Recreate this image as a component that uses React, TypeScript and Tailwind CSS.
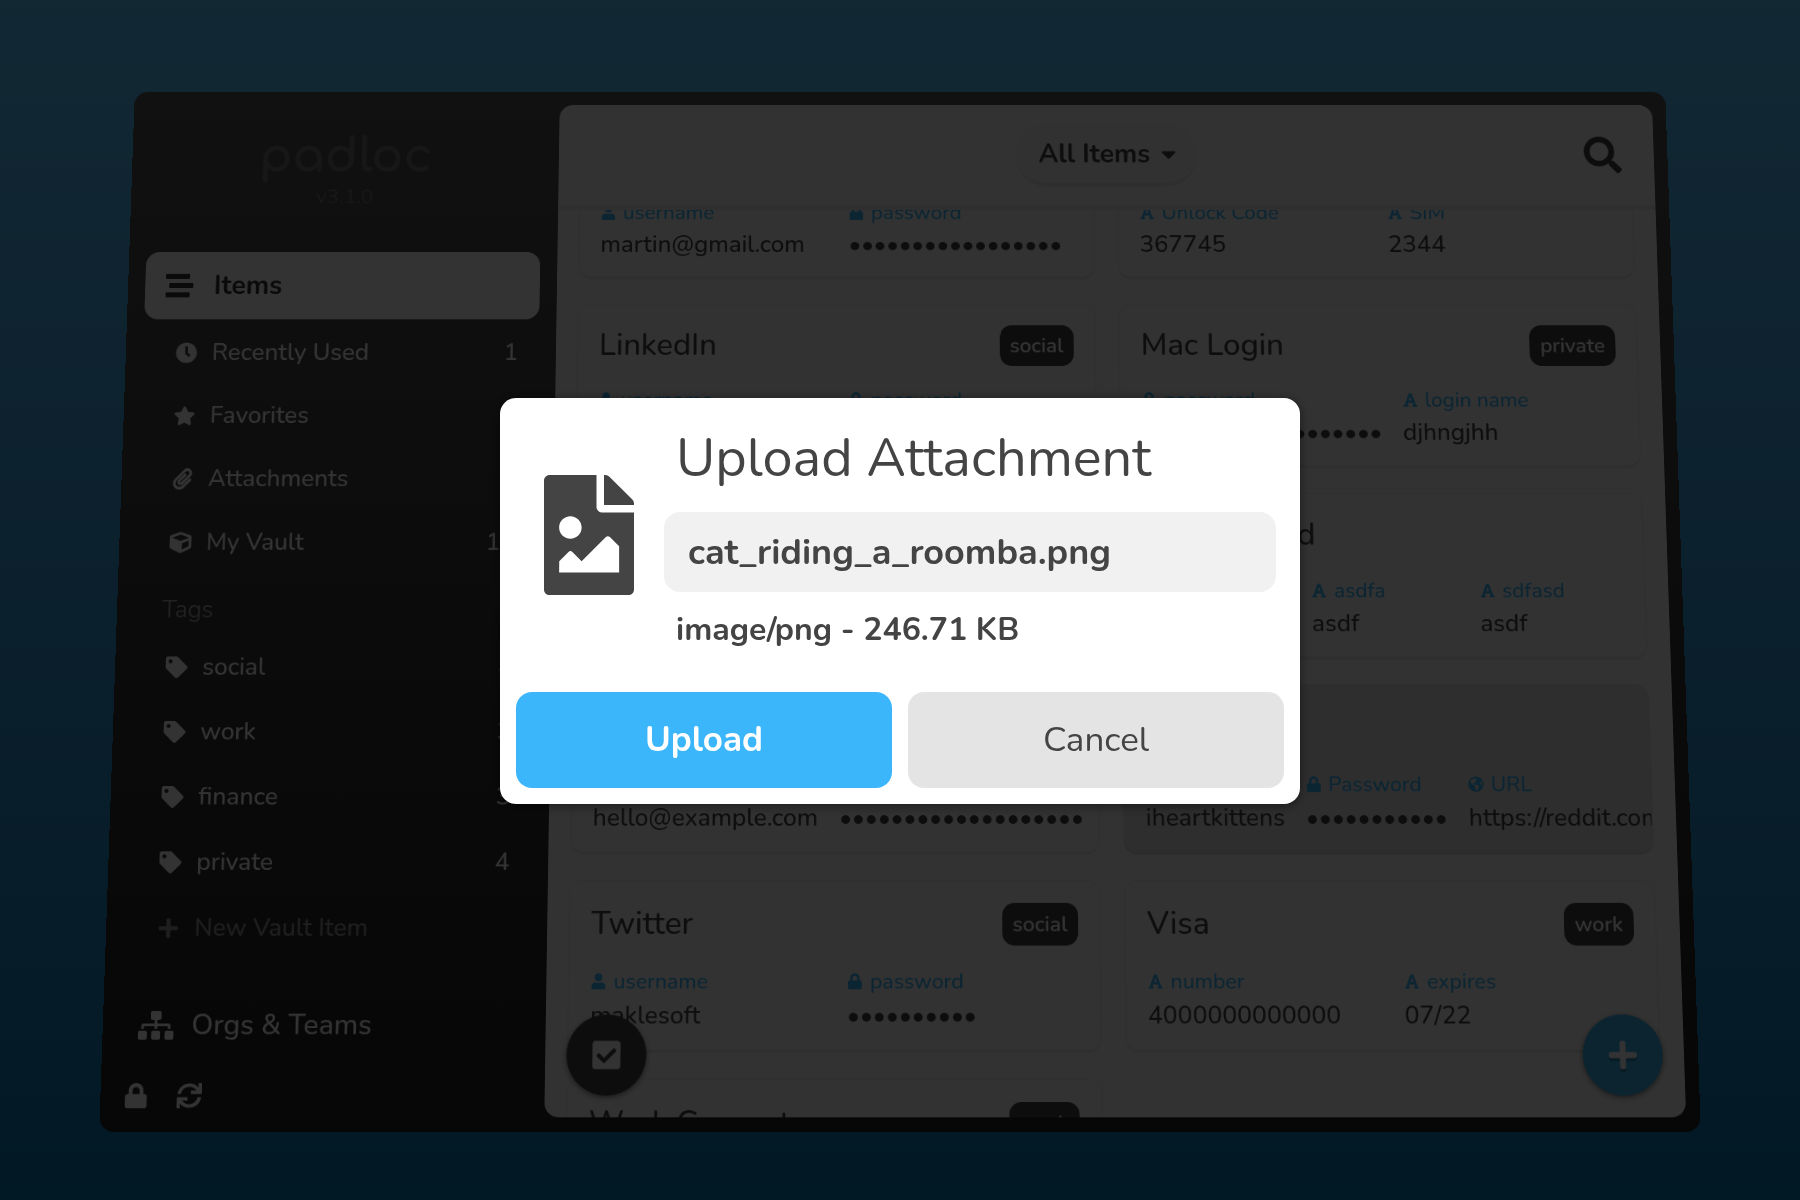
import type { ReactNode } from "react";
import type { IconType } from "react-icons";
import {
  FaCaretDown,
  FaCheckSquare,
  FaClock,
  FaCube,
  FaFileImage,
  FaFont,
  FaGlobeAmericas,
  FaLock,
  FaPaperclip,
  FaPlus,
  FaSearch,
  FaSitemap,
  FaStar,
  FaStream,
  FaSync,
  FaTag,
  FaUser,
} from "react-icons/fa";

type Field = { icon: IconType; label: string; value: string };
type Item = { title: string; tag?: string; fields: Field[]; selected?: boolean };

const user = (value: string, label = "username"): Field => ({ icon: FaUser, label, value });
const secret = (length: number, label = "password"): Field => ({ icon: FaLock, label, value: "•".repeat(length) });
const plain = (label: string, value: string): Field => ({ icon: FaFont, label, value });

const items: Item[] = [
  { title: "Google", tag: "work", fields: [user("martin@gmail.com"), secret(17)] },
  { title: "iPhone", tag: "private", fields: [plain("Unlock Code", "367745"), plain("SIM", "2344")] },
  { title: "LinkedIn", tag: "social", fields: [user("maklesoft"), secret(12)] },
  { title: "Mac Login", tag: "private", fields: [secret(19), plain("login name", "djhngjhh")] },
  { title: "Netflix", tag: "private", fields: [user("martin"), secret(12)] },
  { title: "New Record", fields: [plain("asdf", "asdf"), plain("asdfa", "asdf"), plain("sdfasd", "asdf")] },
  { title: "Paypal", tag: "finance", fields: [user("hello@example.com"), secret(19)] },
  {
    title: "Reddit",
    selected: true,
    fields: [
      user("iheartkittens", "Username"),
      secret(11, "Password"),
      { icon: FaGlobeAmericas, label: "URL", value: "https://reddit.com" },
    ],
  },
  { title: "Twitter", tag: "social", fields: [user("maklesoft"), secret(10)] },
  { title: "Visa", tag: "work", fields: [plain("number", "4000000000000"), plain("expires", "07/22")] },
  { title: "Work Computer", tag: "work", fields: [user("martin"), secret(12)] },
];

function NavRow({ icon: Icon, label, count, muted }: { icon: IconType; label: string; count?: number; muted?: boolean }) {
  return (
    <li>
      <button
        type="button"
        className={`flex h-[74px] w-full items-center px-6 text-left text-[28px] text-white ${muted ? "opacity-50" : ""}`}
      >
        <span className="-ml-1 flex w-[60px] justify-center">
          <Icon className="size-[25px]" />
        </span>
        <span className="flex-1">{label}</span>
        {count !== undefined && <span>{count}</span>}
      </button>
    </li>
  );
}

function IconButton({ label, children }: { label: string; children: ReactNode }) {
  return (
    <button type="button" aria-label={label} className="flex size-[60px] items-center justify-center">
      {children}
    </button>
  );
}

function Sidebar() {
  return (
    <aside className="flex w-[500px] shrink-0 flex-col px-5 text-white">
      <div className="h-48 shrink-0 pt-12 text-center opacity-20">
        <div className="font-[Comfortaa,Quicksand,Inter,sans-serif] text-[56px] leading-[60px] font-bold">padloc</div>
        <div className="mt-1 text-2xl leading-7">v3.1.0</div>
      </div>
      <nav className="flex flex-1 flex-col">
        <button
          type="button"
          className="flex h-20 items-center gap-2.5 rounded-2xl bg-white pl-2.5 text-left text-[31px] font-bold text-[#333]"
        >
          <span className="flex w-[60px] justify-center">
            <FaStream className="size-8" />
          </span>
          Items
        </button>
        <ul className="pt-0.5">
          <NavRow icon={FaClock} label="Recently Used" count={1} />
          <NavRow icon={FaStar} label="Favorites" count={2} />
          <NavRow icon={FaPaperclip} label="Attachments" count={1} />
          <NavRow icon={FaCube} label="My Vault" count={13} />
        </ul>
        <h2 className="flex h-[70px] items-center pt-3 pl-8 text-[28px] font-light opacity-60">Tags</h2>
        <ul>
          <NavRow icon={FaTag} label="social" count={4} />
          <NavRow icon={FaTag} label="work" count={3} />
          <NavRow icon={FaTag} label="finance" count={3} />
          <NavRow icon={FaTag} label="private" count={4} />
          <NavRow icon={FaPlus} label="New Vault Item" muted />
        </ul>
        <button type="button" className="mt-auto flex h-20 items-center gap-2.5 pl-2.5 text-left text-[32px]">
          <span className="flex w-[60px] justify-center">
            <FaSitemap className="h-8 w-10" />
          </span>
          Orgs &amp; Teams
        </button>
      </nav>
      <div className="-mx-2.5 mt-2 mb-2.5 flex">
        <IconButton label="Lock">
          <FaLock className="size-7" />
        </IconButton>
        <IconButton label="Synchronize">
          <FaSync className="size-7" />
        </IconButton>
      </div>
    </aside>
  );
}

function Card({ item }: { item: Item }) {
  return (
    <article
      className={`h-[194px] overflow-hidden rounded-2xl border-2 border-b-4 ${
        item.selected ? "border-[#e4e4e4] border-b-[#dcdcdc] bg-[#e6e6e6]" : "border-[#f0f0f0] border-b-[#e8e8e8] bg-[#fafafa]"
      }`}
    >
      <header className="flex h-24 items-center justify-between px-6">
        <h3 className="text-4xl">{item.title}</h3>
        {item.tag && (
          <span className="flex h-12 items-center rounded-[14px] bg-[#444] px-3 text-2xl font-semibold text-white">
            {item.tag}
          </span>
        )}
      </header>
      <dl className="flex pr-2 pl-3">
        {item.fields.map(({ icon: Icon, label, value }) => (
          <div key={label} className="flex-1 px-3 whitespace-nowrap">
            <dt className="flex h-8 items-center gap-2 text-2xl text-[#3bb7f9]">
              <Icon className="size-[18px]" />
              {label}
            </dt>
            <dd className="flex h-11 items-center text-[28px]">{value}</dd>
          </div>
        ))}
      </dl>
    </article>
  );
}

function ItemList() {
  return (
    <main className="relative my-4 mr-4 flex min-w-0 flex-1 flex-col overflow-hidden rounded-2xl bg-[#fafafa] text-[#444]">
      <header className="grid h-[126px] shrink-0 grid-cols-[1fr_auto_1fr] items-center border-b-[6px] border-[#ebebeb] px-[38px]">
        <button
          type="button"
          className="col-start-2 flex h-[76px] items-center gap-2 rounded-full border-b-4 border-[#e4e4e4] bg-[#f3f3f3] pt-0.5 pr-5 pl-7 text-[31px] font-bold"
        >
          All Items
          <FaCaretDown className="size-7" />
        </button>
        <button type="button" aria-label="Search" className="justify-self-end">
          <FaSearch className="size-11" />
        </button>
      </header>
      <div className="min-h-0 flex-1 overflow-hidden">
        <div className="-mt-[111px] grid grid-cols-2 gap-x-[26px] gap-y-7 pr-[26px] pl-6">
          {items.map((item) => (
            <Card key={item.title} item={item} />
          ))}
        </div>
      </div>
      <button
        type="button"
        aria-label="Select items"
        className="absolute bottom-6 left-6 flex size-[90px] items-center justify-center rounded-full bg-[#444] text-white shadow-[0_2px_6px_rgba(0,0,0,0.5)]"
      >
        <FaCheckSquare className="size-9" />
      </button>
      <button
        type="button"
        aria-label="Add item"
        className="absolute right-6 bottom-6 flex size-[90px] items-center justify-center rounded-full bg-[#37b4f0] text-white shadow-[0_2px_6px_rgba(0,0,0,0.5)]"
      >
        <FaPlus className="size-9 drop-shadow-[0_3px_0_rgba(0,0,0,0.3)]" />
      </button>
    </main>
  );
}

function UploadDialog() {
  return (
    <div
      role="dialog"
      aria-labelledby="upload-title"
      className="w-[800px] rounded-2xl bg-white p-4 text-[#444] shadow-[0_2px_12px_rgba(0,0,0,0.5)]"
    >
      <div className="flex items-center gap-[30px] pr-2 pb-10 pl-7">
        <FaFileImage className="mt-1 h-[120px] w-[90px] shrink-0" />
        <div className="min-w-0 flex-1">
          <h1 id="upload-title" className="px-3 pt-2 pb-0.5 text-[54px] leading-[72px]">
            Upload Attachment
          </h1>
          <input
            aria-label="File name"
            defaultValue="cat_riding_a_roomba.png"
            className="mt-4 h-20 w-full rounded-2xl bg-[#f1f1f1] px-6 text-4xl font-bold outline-none"
          />
          <p className="mt-4 px-3 text-[32px] leading-[44px] font-bold">image/png - 246.71 KB</p>
        </div>
      </div>
      <div className="grid grid-cols-2 gap-4">
        <button type="button" className="h-24 rounded-2xl bg-[#3cb6fa] text-[35px] font-bold text-white">
          Upload
        </button>
        <button type="button" className="h-24 rounded-2xl bg-[#e4e4e4] text-[35px]">
          Cancel
        </button>
      </div>
    </div>
  );
}

export default function App() {
  return (
    <div className="relative h-screen overflow-hidden bg-linear-to-b from-[#59c6ff] to-[#077cb9] font-[Nunito,Lato,sans-serif] perspective-[2000px]">
      <div className="flex h-full transform-[translateZ(-300px)_rotateX(5deg)] overflow-hidden rounded-2xl bg-linear-to-b from-[#555] to-[#222] font-medium">
        <Sidebar />
        <ItemList />
      </div>
      <div className="absolute inset-0 flex items-center justify-center bg-black/80 pt-0.5">
        <UploadDialog />
      </div>
    </div>
  );
}
